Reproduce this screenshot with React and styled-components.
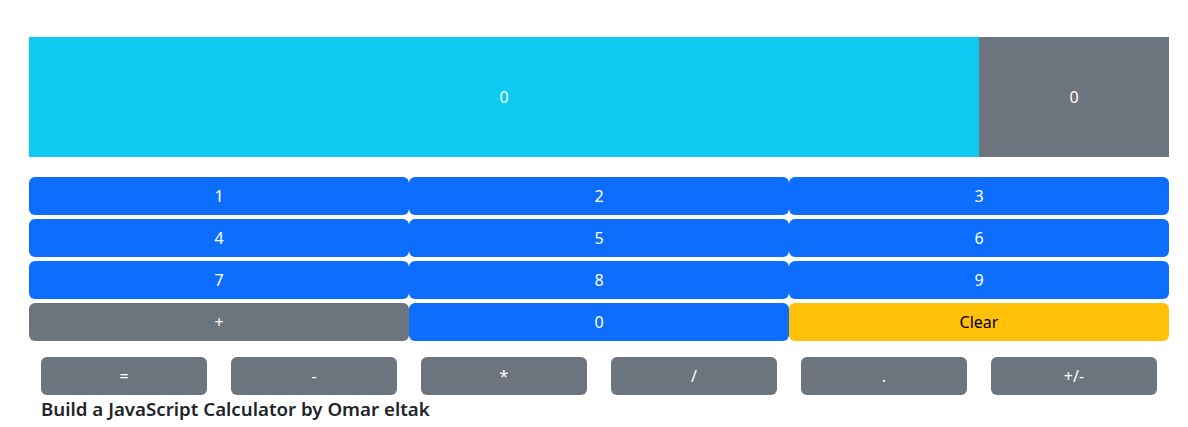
import React from "react";
import styled, { createGlobalStyle } from "styled-components";

const GlobalStyle = createGlobalStyle`
  body {
    margin: 0;
    background: #fff;
    font-family: "Noto Sans", "Open Sans", sans-serif;
    color: #212529;
  }
`;

const Page = styled.div`
  padding: 37px 19px 0 29px;
`;

const Display = styled.div`
  display: grid;
  grid-template-columns: 950px 190px;
  height: 120px;
`;

const Screen = styled.div`
  display: flex;
  align-items: center;
  justify-content: center;
  background: ${(p) => p.bg};
  color: #fff;
  font-size: 16px;
`;

const Pad = styled.div`
  margin-top: 20px;
  display: grid;
  grid-template-columns: repeat(3, 380px);
  row-gap: 4px;
`;

const Key = styled.button`
  height: 38px;
  border: none;
  border-radius: 6px;
  background: ${(p) => p.bg || "#0d6efd"};
  color: ${(p) => p.fg || "#fff"};
  font-family: inherit;
  font-size: 16px;
  padding: 0;
  cursor: pointer;
`;

const Ops = styled.div`
  margin-top: 16px;
  display: grid;
  grid-template-columns: repeat(6, 190px);
`;

const OpCell = styled.div`
  padding: 0 12px;
`;

const OpKey = styled(Key)`
  width: 100%;
  background: #6c757d;
`;

const Credit = styled.div`
  padding-left: 12px;
  font-size: 18.7px;
  font-weight: 600;
  line-height: 28px;
  color: #212529;
`;

const digits = ["1", "2", "3", "4", "5", "6", "7", "8", "9"];
const ops = ["=", "-", "*", "/", ".", "+/-"];

export default function App() {
  return (
    <Page>
      <GlobalStyle />
      <Display>
        <Screen bg="#0dcaf0">0</Screen>
        <Screen bg="#6c757d">0</Screen>
      </Display>
      <Pad>
        {digits.map((d) => (
          <Key key={d}>{d}</Key>
        ))}
        <Key bg="#6c757d">+</Key>
        <Key>0</Key>
        <Key bg="#ffc107" fg="#000">
          Clear
        </Key>
      </Pad>
      <Ops>
        {ops.map((o) => (
          <OpCell key={o}>
            <OpKey>{o}</OpKey>
          </OpCell>
        ))}
      </Ops>
      <Credit>Build a JavaScript Calculator by Omar eltak</Credit>
    </Page>
  );
}
